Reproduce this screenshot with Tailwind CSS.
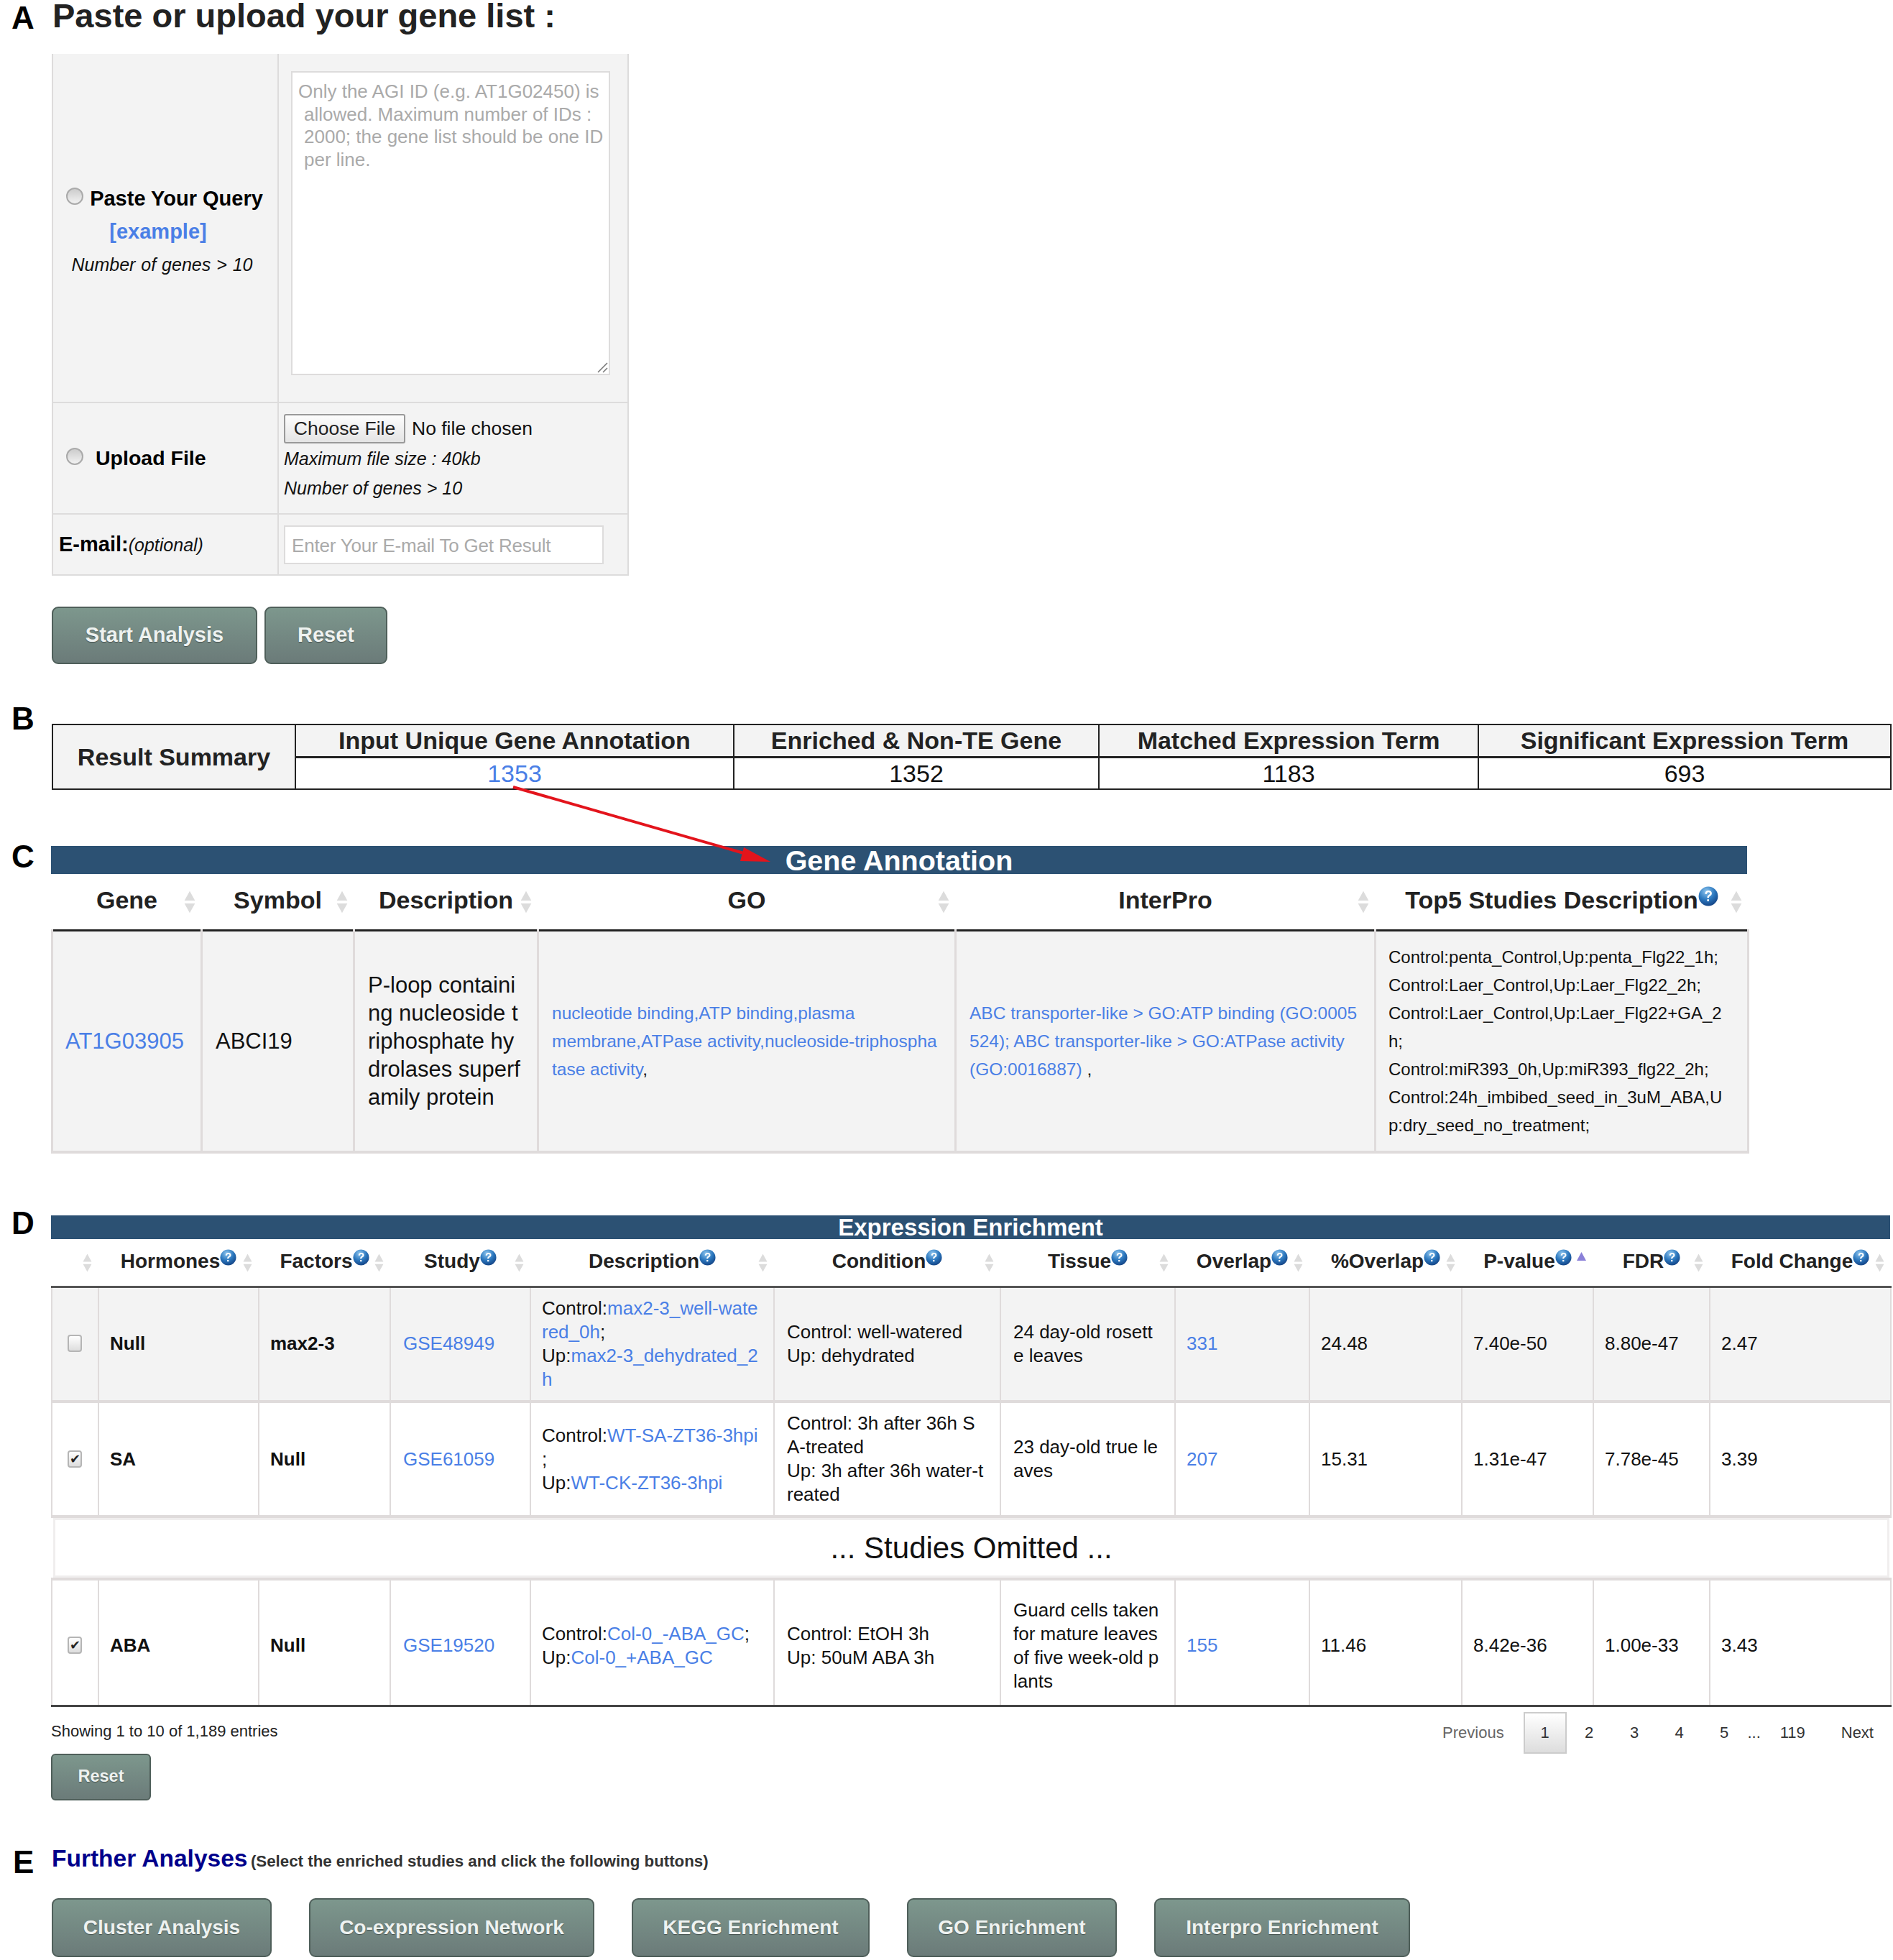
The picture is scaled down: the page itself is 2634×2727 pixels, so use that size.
<!DOCTYPE html>
<html lang="en">
<head>
    <meta charset="UTF-8">
    <title>Gene list enrichment</title>
    <script src="https://cdn.jsdelivr.net/npm/@tailwindcss/browser@4"></script>
</head>
<body class="bg-white text-[#111] font-['Liberation_Sans',Arial,sans-serif]">

<svg class="absolute w-0 h-0">
    <defs>
        <radialGradient id="ball" cx="40%" cy="25%" r="80%">
            <stop offset="0" stop-color="#8cc4ee"/>
            <stop offset="0.55" stop-color="#2a76bd"/>
            <stop offset="1" stop-color="#123f80"/>
        </radialGradient>
    </defs>
    <symbol id="help" viewBox="0 0 24 24">
        <circle cx="12" cy="12" r="11.500" fill="url(#ball)"/>
        <path d="M8 9.200c0-2.600 1.800-4 4.200-4s4 1.300 4 3.300c0 1.700-1 2.500-2.100 3.200-1 .6-1.300 1-1.300 2.200h-2.200c0-1.900.5-2.700 1.800-3.500 1-.6 1.500-1 1.500-1.800 0-.9-.7-1.500-1.700-1.500-1.100 0-1.800.7-1.900 2.100zM10.600 15.600h2.300v2.400h-2.300z" fill="#fff"/>
    </symbol>
    <symbol id="sort" viewBox="0 0 12 24">
        <path d="M6 0.500L11.500 10.500H0.500zM6 23.500L11.500 13.500H0.500z" fill="#dcdcdc"/>
    </symbol>
</svg>

<div class="relative w-[2634px] h-[2727px] overflow-hidden">

    <!-- arrow from the 1353 link to the annotation table -->
    <svg class="absolute left-0 top-0 z-10 pointer-events-none" width="2634" height="1300">
        <line x1="714" y1="1095" x2="1045" y2="1190" stroke="#e3141c" stroke-width="4"/>
        <path d="M1072 1199L1035 1179L1030 1198z" fill="#e3141c"/>
    </svg>

    <!-- A -->
    <section class="flex">
        <div class="w-[71px] shrink-0 pl-[16px] text-[44px] leading-[44px] font-bold text-black pt-[3px]">A</div>
        <div class="pl-[1px]">
            <h1 class="h-[75px] text-[47px] leading-[44px] font-bold text-[#222] pl-[1px]">Paste or upload your gene list :</h1>
            <table class="table-fixed w-[801px] bg-[#f3f3f3]">
                <colgroup><col class="w-[314px]"><col class="w-[487px]"></colgroup>
                <tr class="h-[485px]">
                    <td class="border-2 border-t-0 border-[#dddcdc] text-center leading-[46px] pt-[10px]">
                        <div class="text-[29px] font-bold text-black flex items-center justify-center gap-[9px] pr-[2px]">
                            <span class="w-[24px] h-[24px] rounded-full border-2 border-[#aaa] bg-linear-to-b from-[#ccc] to-[#f2f2f2] -mt-[6px]"></span>
                            Paste Your Query
                        </div>
                        <div class="text-[29px] font-bold pr-[20px]"><a class="text-[#4a7fe6]" href="#">[example]</a></div>
                        <div class="text-[25px] italic pr-[9px] [word-spacing:1px]">Number of genes &gt; 10</div>
                    </td>
                    <td class="border-2 border-t-0 border-[#dddcdc] pl-[17px] pr-[24px] align-top pt-[24px]">
                        <div class="relative w-[444px] h-[423px] bg-white border-2 border-[#dddcdc] pl-[8px] pt-[11px] text-[26px] leading-[31.500px] text-[#aaa] whitespace-nowrap">
                            <div>Only the AGI ID (e.g. AT1G02450) is</div>
                            <div class="pl-[8px]">allowed. Maximum number of IDs :<br>2000; the gene list should be one ID<br>per line.</div>
                            <svg class="absolute right-[1px] bottom-[1px]" width="16" height="16" viewBox="0 0 16 16" stroke="#777" stroke-width="1.500"><path d="M2 15L15 2M9 15L15 9"/></svg>
                        </div>
                    </td>
                </tr>
                <tr class="h-[155px]">
                    <td class="border-2 border-[#dddcdc] pl-[18px]">
                        <div class="flex items-center gap-[17px] text-[28.500px] font-bold text-black">
                            <span class="w-[24px] h-[24px] rounded-full border-2 border-[#aaa] bg-linear-to-b from-[#ccc] to-[#f2f2f2] -mt-[6px]"></span>
                            Upload File
                        </div>
                    </td>
                    <td class="border-2 border-[#dddcdc] pl-[7px]">
                        <div class="flex items-center text-[26.500px] leading-[41px]">
                            <span class="w-[169px] h-[41px] text-center border-2 border-[#999] rounded-[3px] bg-linear-to-b from-[#fdfdfd] to-[#e4e4e4] text-[#222] leading-[37px]">Choose File</span>
                            <span class="ml-[9px]">No file chosen</span>
                        </div>
                        <div class="text-[25px] italic leading-[41px] mt-[1px]">Maximum file size : 40kb</div>
                        <div class="text-[25px] italic leading-[41px]">Number of genes &gt; 10</div>
                    </td>
                </tr>
                <tr class="h-[85px]">
                    <td class="border-2 border-[#dddcdc] pl-[8px]">
                        <span class="text-[29px] font-bold text-black">E-mail:</span><span class="text-[25px] italic">(optional)</span>
                    </td>
                    <td class="border-2 border-[#dddcdc] pl-[7px]">
                        <div class="w-[445px] h-[54px] bg-white border-2 border-[#dddcdc] pl-[9px] text-[26px] tracking-[-0.2px] leading-[52px] text-[#aaa]">Enter Your E-mail To Get Result</div>
                    </td>
                </tr>
            </table>
            <div class="flex gap-[10px] mt-[43px]">
                <button class="w-[286px] h-[80px] rounded-[9px] border-2 border-[#4f5f5a] bg-linear-to-b from-[#7d978d] to-[#6b7b79] text-[29px] font-bold text-[#eef2f0] [text-shadow:0_1px_1px_rgba(0,0,0,0.4)]">Start Analysis</button>
                <button class="w-[171px] h-[80px] rounded-[9px] border-2 border-[#4f5f5a] bg-linear-to-b from-[#7d978d] to-[#6b7b79] text-[29px] font-bold text-[#eef2f0] [text-shadow:0_1px_1px_rgba(0,0,0,0.4)]">Reset</button>
            </div>
        </div>
    </section>

    <!-- B -->
    <section class="flex mt-[83px]">
        <div class="w-[71px] shrink-0 pl-[16px] text-[44px] leading-[44px] font-bold text-black -mt-[29px]">B</div>
        <table class="table-fixed w-[2558px] h-[90px] ml-[1px] border-2 border-[#222] text-center leading-[38px]">
            <colgroup><col class="w-[338px]"><col class="w-[610px]"><col class="w-[508px]"><col class="w-[528px]"><col class="w-[574px]"></colgroup>
            <tr class="h-[45px] bg-[#f3f3f3] text-[34px] font-bold text-[#222]">
                <th rowspan="2" class="border-2 border-[#222]">Result Summary</th>
                <th class="border-2 border-[#222] border-b-[3px]">Input Unique Gene Annotation</th>
                <th class="border-2 border-[#222] border-b-[3px]">Enriched &amp; Non-TE Gene</th>
                <th class="border-2 border-[#222] border-b-[3px]">Matched Expression Term</th>
                <th class="border-2 border-[#222] border-b-[3px]">Significant Expression Term</th>
            </tr>
            <tr class="h-[45px] text-[34px]">
                <td class="border-2 border-[#222]"><a class="text-[#4a7fe6]" href="#">1353</a></td>
                <td class="border-2 border-[#222]">1352</td>
                <td class="border-2 border-[#222]">1183</td>
                <td class="border-2 border-[#222]">693</td>
            </tr>
        </table>
    </section>

    <!-- C -->
    <section class="flex mt-[78px]">
        <div class="w-[71px] shrink-0 pl-[16px] text-[44px] leading-[44px] font-bold text-black -mt-[7px]">C</div>
        <div class="w-[2360px]">
            <div class="h-[39px] bg-[#2c5173] text-center text-white font-bold text-[39.500px] leading-[40px]">Gene Annotation</div>
            <table class="table-fixed w-[2360px]">
                <colgroup><col class="w-[208px]"><col class="w-[212px]"><col class="w-[256px]"><col class="w-[581px]"><col class="w-[584px]"><col class="w-[519px]"></colgroup>
                <tr class="h-[78px] text-[34px] text-[#222] border-b-[3px] border-[#222]">
                    <th class="relative font-bold pb-[3px]">Gene<svg class="absolute right-[9px] top-[22px] w-[16px] h-[34px]"><use href="#sort"/></svg></th>
                    <th class="relative font-bold pb-[3px]">Symbol<svg class="absolute right-[9px] top-[22px] w-[16px] h-[34px]"><use href="#sort"/></svg></th>
                    <th class="relative font-bold pb-[3px]">Description<svg class="absolute right-[9px] top-[22px] w-[16px] h-[34px]"><use href="#sort"/></svg></th>
                    <th class="relative font-bold pb-[3px]">GO<svg class="absolute right-[9px] top-[22px] w-[16px] h-[34px]"><use href="#sort"/></svg></th>
                    <th class="relative font-bold pb-[3px]">InterPro<svg class="absolute right-[9px] top-[22px] w-[16px] h-[34px]"><use href="#sort"/></svg></th>
                    <th class="relative font-bold pb-[3px]">Top5 Studies Description<svg class="inline-block w-[28px] h-[28px] align-[3px]"><use href="#help"/></svg><svg class="absolute right-[9px] top-[22px] w-[16px] h-[34px]"><use href="#sort"/></svg></th>
                </tr>
                <tr class="h-[309px] bg-[#f3f3f3] border-b-4 border-[#dfdbdb] leading-[39px]">
                    <td class="border-x-[3px] border-[#dfdbdb] pl-[17px] text-[31px]"><a class="text-[#4a7fe6]" href="#">AT1G03905</a></td>
                    <td class="border-x-[3px] border-[#dfdbdb] pl-[18px] text-[31px]">ABCI19</td>
                    <td class="border-x-[3px] border-[#dfdbdb] pl-[18px] pr-[18px] text-[31px] break-all">P-loop containing nucleoside triphosphate hydrolases superfamily protein</td>
                    <td class="border-x-[3px] border-[#dfdbdb] pl-[18px] pr-[24px] text-[24.500px] break-all text-[#4a7fe6]">nucleotide binding,ATP binding,plasma<br>membrane,ATPase activity,nucleoside-triphosphatase activity<span class="text-[#111]">,</span></td>
                    <td class="border-x-[3px] border-[#dfdbdb] pl-[18px] pr-[22px] text-[24.500px] break-all text-[#4a7fe6]">ABC transporter-like &gt; GO:ATP binding (GO:0005524); ABC transporter-like &gt; GO:ATPase activity<br>(GO:0016887) <span class="text-[#111]">,</span></td>
                    <td class="border-x-[3px] border-[#dfdbdb] pl-[17px] pr-[21px] text-[24px] break-all">Control:penta_Control,Up:penta_Flg22_1h;<br>Control:Laer_Control,Up:Laer_Flg22_2h;<br>Control:Laer_Control,Up:Laer_Flg22+GA_2h;<br>Control:miR393_0h,Up:miR393_flg22_2h;<br>Control:24h_imbibed_seed_in_3uM_ABA,Up:dry_seed_no_treatment;</td>
                </tr>
            </table>
        </div>
    </section>

    <!-- D -->
    <section class="flex mt-[86px]">
        <div class="w-[71px] shrink-0 pl-[16px] text-[44px] leading-[44px] font-bold text-black -mt-[11px]">D</div>
        <div class="w-[2559px]">
            <div class="h-[33px] bg-[#2c5173] text-center text-white font-bold text-[33px] leading-[34px]">Expression Enrichment</div>
            <table class="table-fixed w-[2559px] text-[26px] leading-[33px]">
                <colgroup><col class="w-[65px]"><col class="w-[223px]"><col class="w-[183px]"><col class="w-[195px]"><col class="w-[339px]"><col class="w-[315px]"><col class="w-[243px]"><col class="w-[187px]"><col class="w-[212px]"><col class="w-[183px]"><col class="w-[162px]"><col class="w-[252px]"></colgroup>
                <tr class="h-[66px] text-[28px] text-[#222] border-b-[3px] border-[#555]">
                    <th class="relative"><svg class="absolute right-[9px] top-[20px] w-[13px] h-[26px]"><use href="#sort"/></svg></th>
                    <th class="relative font-bold pb-[4px]">Hormones<svg class="inline-block w-[23px] h-[23px] align-[3px]"><use href="#help"/></svg><svg class="absolute right-[9px] top-[20px] w-[13px] h-[26px]"><use href="#sort"/></svg></th>
                    <th class="relative font-bold pb-[4px]">Factors<svg class="inline-block w-[23px] h-[23px] align-[3px]"><use href="#help"/></svg><svg class="absolute right-[9px] top-[20px] w-[13px] h-[26px]"><use href="#sort"/></svg></th>
                    <th class="relative font-bold pb-[4px]">Study<svg class="inline-block w-[23px] h-[23px] align-[3px]"><use href="#help"/></svg><svg class="absolute right-[9px] top-[20px] w-[13px] h-[26px]"><use href="#sort"/></svg></th>
                    <th class="relative font-bold pb-[4px]">Description<svg class="inline-block w-[23px] h-[23px] align-[3px]"><use href="#help"/></svg><svg class="absolute right-[9px] top-[20px] w-[13px] h-[26px]"><use href="#sort"/></svg></th>
                    <th class="relative font-bold pb-[4px]">Condition<svg class="inline-block w-[23px] h-[23px] align-[3px]"><use href="#help"/></svg><svg class="absolute right-[9px] top-[20px] w-[13px] h-[26px]"><use href="#sort"/></svg></th>
                    <th class="relative font-bold pb-[4px]">Tissue<svg class="inline-block w-[23px] h-[23px] align-[3px]"><use href="#help"/></svg><svg class="absolute right-[9px] top-[20px] w-[13px] h-[26px]"><use href="#sort"/></svg></th>
                    <th class="relative font-bold pb-[4px]">Overlap<svg class="inline-block w-[23px] h-[23px] align-[3px]"><use href="#help"/></svg><svg class="absolute right-[9px] top-[20px] w-[13px] h-[26px]"><use href="#sort"/></svg></th>
                    <th class="relative font-bold pb-[4px]">%Overlap<svg class="inline-block w-[23px] h-[23px] align-[3px]"><use href="#help"/></svg><svg class="absolute right-[9px] top-[20px] w-[13px] h-[26px]"><use href="#sort"/></svg></th>
                    <th class="relative font-bold pb-[4px]">P-value<svg class="inline-block w-[23px] h-[23px] align-[3px]"><use href="#help"/></svg><svg class="absolute right-[10px] top-[18px] w-[13px] h-[12px]" viewBox="0 0 13 12"><path d="M6.500 0L13 12H0z" fill="#8a80d8"/></svg></th>
                    <th class="relative font-bold pb-[4px]">FDR<svg class="inline-block w-[23px] h-[23px] align-[3px]"><use href="#help"/></svg><svg class="absolute right-[9px] top-[20px] w-[13px] h-[26px]"><use href="#sort"/></svg></th>
                    <th class="relative font-bold pb-[4px]">Fold Change<svg class="inline-block w-[23px] h-[23px] align-[3px]"><use href="#help"/></svg><svg class="absolute right-[9px] top-[20px] w-[13px] h-[26px]"><use href="#sort"/></svg></th>
                </tr>
                <tr class="h-[160px] bg-[#f3f3f3] border-b-4 border-[#dfdbdb] [&>td]:border-x-2 [&>td]:border-[#dfdbdb] [&>td]:pl-[15px] [&>td]:pr-[16px] [&>td]:break-all">
                    <td class="text-center"><span class="inline-block w-[20px] h-[24px] rounded-[4px] border-2 border-[#b5b5b5] bg-linear-to-b from-[#fff] to-[#ddd] -mt-[4px] align-middle"></span></td>
                    <td class="font-bold">Null</td>
                    <td class="font-bold">max2-3</td>
                    <td class="!pl-[17px]"><a class="text-[#4a7fe6]" href="#">GSE48949</a></td>
                    <td>Control:<a class="text-[#4a7fe6]" href="#">max2-3_well-watered_0h</a>;<br>Up:<a class="text-[#4a7fe6]" href="#">max2-3_dehydrated_2h</a></td>
                    <td class="!pl-[17px] !pr-[18px]">Control: well-watered<br>Up: dehydrated</td>
                    <td class="!pl-[17px] !pr-[19px]">24 day-old rosette leaves</td>
                    <td><a class="text-[#4a7fe6]" href="#">331</a></td>
                    <td>24.48</td>
                    <td>7.40e-50</td>
                    <td>8.80e-47</td>
                    <td>2.47</td>
                </tr>
                <tr class="h-[160px] border-b-4 border-[#dfdbdb] [&>td]:border-x-2 [&>td]:border-[#dfdbdb] [&>td]:pl-[15px] [&>td]:pr-[16px] [&>td]:break-all">
                    <td class="text-center"><span class="inline-block w-[20px] h-[24px] rounded-[4px] border-2 border-[#b5b5b5] bg-linear-to-b from-[#fff] to-[#ddd] -mt-[4px] align-middle text-[18px] leading-[20px] text-[#222]">✔</span></td>
                    <td class="font-bold">SA</td>
                    <td class="font-bold">Null</td>
                    <td class="!pl-[17px]"><a class="text-[#4a7fe6]" href="#">GSE61059</a></td>
                    <td>Control:<a class="text-[#4a7fe6]" href="#">WT-SA-ZT36-3hpi</a><br>;<br>Up:<a class="text-[#4a7fe6]" href="#">WT-CK-ZT36-3hpi</a></td>
                    <td class="!pl-[17px] !pr-[18px]">Control: 3h after 36h SA-treated<br>Up: 3h after 36h water-treated</td>
                    <td class="!pl-[17px] !pr-[19px]">23 day-old true leaves</td>
                    <td><a class="text-[#4a7fe6]" href="#">207</a></td>
                    <td>15.31</td>
                    <td>1.31e-47</td>
                    <td>7.78e-45</td>
                    <td>3.39</td>
                </tr>
                <tr class="h-[87px] border-b-4 border-[#dfdbdb]">
                    <td colspan="12" class="p-0">
                        <div class="h-[83px] mx-[2px] border-[3px] border-[#f0eeee] flex items-center justify-center text-[42px]">... Studies Omitted ...</div>
                    </td>
                </tr>
                <tr class="h-[176px] border-b-[3px] border-[#444] [&>td]:border-x-2 [&>td]:border-[#dfdbdb] [&>td]:pl-[15px] [&>td]:pr-[16px] [&>td]:pt-[9px] [&>td]:break-all">
                    <td class="text-center"><span class="inline-block w-[20px] h-[24px] rounded-[4px] border-2 border-[#b5b5b5] bg-linear-to-b from-[#fff] to-[#ddd] -mt-[4px] align-middle text-[18px] leading-[20px] text-[#222]">✔</span></td>
                    <td class="font-bold">ABA</td>
                    <td class="font-bold">Null</td>
                    <td class="!pl-[17px]"><a class="text-[#4a7fe6]" href="#">GSE19520</a></td>
                    <td>Control:<a class="text-[#4a7fe6]" href="#">Col-0_-ABA_GC</a>;<br>Up:<a class="text-[#4a7fe6]" href="#">Col-0_+ABA_GC</a></td>
                    <td class="!pl-[17px] !pr-[18px]">Control: EtOH 3h<br>Up: 50uM ABA 3h</td>
                    <td class="!pl-[17px] !pr-[19px]">Guard cells taken for mature leaves of five week-old plants</td>
                    <td><a class="text-[#4a7fe6]" href="#">155</a></td>
                    <td>11.46</td>
                    <td>8.42e-36</td>
                    <td>1.00e-33</td>
                    <td>3.43</td>
                </tr>
            </table>
            <div class="flex justify-between h-[65px] text-[22px] leading-[28px]">
                <div class="mt-[20px] text-[#222]">Showing 1 to 10 of 1,189 entries</div>
                <div class="flex items-center h-[58px] mt-[7px] pr-[23px] text-[#333]">
                    <span class="mr-[27px] text-[#666]">Previous</span>
                    <span class="w-[60px] h-[58px] border-2 border-[#ccc] bg-linear-to-b from-[#fff] to-[#ddd] flex items-center justify-center">1</span>
                    <span class="w-[63px] text-center">2</span>
                    <span class="w-[63px] text-center">3</span>
                    <span class="w-[62px] text-center">4</span>
                    <span class="w-[63px] text-center">5</span>
                    <span class="w-[20px] text-center">...</span>
                    <span class="ml-[26px]">119</span>
                    <span class="ml-[50px]">Next</span>
                </div>
            </div>
            <button class="block w-[139px] h-[65px] rounded-[6px] border-2 border-[#4f5f5a] bg-linear-to-b from-[#7d978d] to-[#6b7b79] text-[23.500px] font-bold text-[#eef2f0] [text-shadow:0_1px_1px_rgba(0,0,0,0.4)]">Reset</button>
        </div>
    </section>

    <!-- E -->
    <section class="flex mt-[56px]">
        <div class="w-[71px] shrink-0 pl-[18px] text-[44px] leading-[44px] font-bold text-black mt-[8px]">E</div>
        <div class="pl-[1px]">
            <div class="h-[50px] leading-[50px] font-bold">
                <span class="text-[33.500px] text-[#00008b]">Further Analyses</span>
                <span class="text-[22.300px] text-[#333]">(Select the enriched studies and click the following buttons)</span>
            </div>
            <div class="flex gap-[52px] mt-[30px]">
                <button class="w-[306px] h-[82px] rounded-[9px] border-2 border-[#4f5f5a] bg-linear-to-b from-[#7d978d] to-[#6b7b79] text-[28px] font-bold text-[#eef2f0] [text-shadow:0_1px_1px_rgba(0,0,0,0.4)]">Cluster Analysis</button>
                <button class="w-[397px] h-[82px] rounded-[9px] border-2 border-[#4f5f5a] bg-linear-to-b from-[#7d978d] to-[#6b7b79] text-[28px] font-bold text-[#eef2f0] [text-shadow:0_1px_1px_rgba(0,0,0,0.4)]">Co-expression Network</button>
                <button class="w-[331px] h-[82px] rounded-[9px] border-2 border-[#4f5f5a] bg-linear-to-b from-[#7d978d] to-[#6b7b79] text-[28px] font-bold text-[#eef2f0] [text-shadow:0_1px_1px_rgba(0,0,0,0.4)]">KEGG Enrichment</button>
                <button class="w-[292px] h-[82px] rounded-[9px] border-2 border-[#4f5f5a] bg-linear-to-b from-[#7d978d] to-[#6b7b79] text-[28px] font-bold text-[#eef2f0] [text-shadow:0_1px_1px_rgba(0,0,0,0.4)]">GO Enrichment</button>
                <button class="w-[356px] h-[82px] rounded-[9px] border-2 border-[#4f5f5a] bg-linear-to-b from-[#7d978d] to-[#6b7b79] text-[28px] font-bold text-[#eef2f0] [text-shadow:0_1px_1px_rgba(0,0,0,0.4)]">Interpro Enrichment</button>
            </div>
        </div>
    </section>
</div>
</body>
</html>
